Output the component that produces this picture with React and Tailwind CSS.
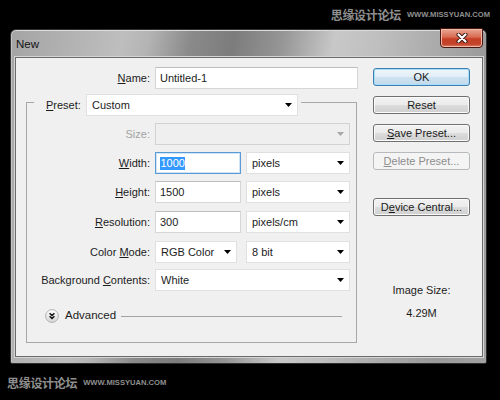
import React from "react";

function Tri({ color = "#000" }) {
  return (
    <svg width="7" height="4" viewBox="0 0 7 4" className="shrink-0">
      <path d="M0 0H7L3.5 4Z" fill={color} />
    </svg>
  );
}

function Select({ className, children, disabled }) {
  return (
    <div
      className={`${className} h-[22px] flex items-center justify-between pl-[5px] pr-[5px] border ${
        disabled ? "bg-[#efefef] border-[#d2d2d2]" : "bg-white border-[#e0e0e0]"
      }`}
    >
      <span>{children}</span>
      <Tri color={disabled ? "#a8a8a8" : "#000"} />
    </div>
  );
}

function Input({ className, children, focused }) {
  return (
    <div
      className={`${className} h-[22px] flex items-center pl-[4px] bg-white border ${
        focused
          ? "border-[#5b9bd5] shadow-[inset_0_0_0_1px_#cfe4f6]"
          : "border-[#d6d6d6] border-t-[#bdbdbd]"
      }`}
    >
      {children}
    </div>
  );
}

function Row({ label, children, labelClass = "w-[123px]", mt, dim }) {
  return (
    <div className={`flex items-center h-[22px] ${mt}`}>
      <div className={`${labelClass} text-right ${dim ? "text-[#a3a3a3]" : ""}`}>{label}</div>
      <div className="ml-[5px] flex gap-[5px]">{children}</div>
    </div>
  );
}

function Btn({ children, kind }) {
  let cls =
    "border-[#707070] text-[#1a1a1a] bg-[linear-gradient(to_bottom,#f2f2f2_0%,#ebebeb_50%,#dddddd_50%,#cfcfcf_100%)] shadow-[inset_0_0_0_1px_#fbfbfb]";
  if (kind === "ok")
    cls =
      "border-[#3c7fb1] text-[#1a1a1a] bg-[linear-gradient(to_bottom,#eef6fb_0%,#e1eef7_50%,#cfe3f1_50%,#c0d9ec_100%)] shadow-[inset_0_0_0_1px_#a9dcf7]";
  if (kind === "disabled")
    cls = "border-[#b7babd] text-[#8d8d8d] bg-[#f4f4f4]";
  return (
    <div
      className={`h-[18px] w-[97px] rounded-[3px] border flex items-center justify-center leading-none ${cls}`}
    >
      {children}
    </div>
  );
}

function Watermark() {
  return (
    <div className="flex items-center gap-[6px]">
      <span className="font-['Noto_Sans_CJK_SC',sans-serif] font-bold text-[12px] leading-none text-[#8f8f8f] tracking-[-0.3px] [text-shadow:0_0_1px_#000]">
        思缘设计论坛
      </span>
      <span className="font-['Liberation_Sans',Arial,sans-serif] font-bold text-[7.6px] leading-none text-[#8f8f8f]">
        WWW.MISSYUAN.COM
      </span>
    </div>
  );
}

export default function App() {
  return (
    <div className="w-[500px] h-[400px] bg-black overflow-hidden flex flex-col font-['Liberation_Sans',Arial,sans-serif] text-[11px] text-[#1c1c1c]">
      <div className="h-[29px] flex justify-end items-start pt-[9px] pr-[10px]">
        <Watermark />
      </div>

      {/* window */}
      <div className="ml-[10px] w-[477px] h-[335px] shrink-0 rounded-t-[6px] rounded-b-[2px] border border-[#2e2e2e] bg-[linear-gradient(100deg,#a4a4a4_0%,#bebebe_21%,#b4b4b4_26%,#8a8a8a_34%,#7c7c7c_42%,#959595_51%,#c8c8c8_61%,#bfbfbf_69%,#ababab_80%,#9a9a9a_90%,#a2a2a2_100%)] shadow-[inset_0_1px_0_#dcdcdc,inset_1px_0_0_#c4c4c4] flex flex-col">
        {/* title bar */}
        <div className="h-[27px] flex items-start justify-between">
          <div className="pl-[5px] pt-[6px] text-[11.5px] text-[#141414]">New</div>
          <div className="-mt-[2px] mr-[3px] w-[43px] h-[20px] rounded-b-[4px] border border-[#4a1610] bg-[linear-gradient(to_bottom,#e9a894_0%,#d86a52_45%,#c63d24_55%,#c4452c_85%,#e08870_100%)] shadow-[inset_0_0_0_1px_#f0b9a8] flex items-center justify-center">
            <svg width="12" height="10" viewBox="0 0 12 10">
              <path d="M2.5 1.5 9.5 8.5M9.5 1.5 2.5 8.5" stroke="#3a1510" strokeWidth="4" strokeLinecap="round" />
              <path d="M2.5 1.5 9.5 8.5M9.5 1.5 2.5 8.5" stroke="#fff" strokeWidth="2.2" strokeLinecap="round" />
            </svg>
          </div>
        </div>

        {/* client */}
        <div className="ml-[4px] mr-[3px] h-[300px] border border-[#6b6b6b] bg-[#f0f0f0] shadow-[0_0_0_1px_#d4d4d4] flex">
          {/* left column */}
          <div className="w-[342px] flex flex-col">
            <Row label={<><u>N</u>ame:</>} labelClass="w-[134px]" mt="mt-[9px]">
              <Input className="w-[203px]">Untitled-1</Input>
            </Row>

            <div className="mt-[13px] ml-[10px] w-[331px] h-[241px] border border-[#a7a7a7] flex flex-col">
              <div className="-mt-[9px] ml-[7px] w-[267px] h-[22px] bg-[#f0f0f0] flex items-center pl-[12px] pr-[3px]">
                <div className="w-[40px]">
                  <u>P</u>reset:
                </div>
                <Select className="w-[212px]">Custom</Select>
              </div>

              <Row label="Size:" dim mt="mt-[7px]">
                <Select className="w-[195px]" disabled>
                  {""}
                </Select>
              </Row>
              <Row label={<><u>W</u>idth:</>} mt="mt-[7px]">
                <Input className="w-[86px]" focused>
                  <span className="bg-[#3399ff] text-white leading-[13px] px-[0.5px]">1000</span>
                </Input>
                <Select className="w-[104px]">pixels</Select>
              </Row>
              <Row label={<><u>H</u>eight:</>} mt="mt-[7px]">
                <Input className="w-[86px]">1500</Input>
                <Select className="w-[104px]">pixels</Select>
              </Row>
              <Row label={<><u>R</u>esolution:</>} mt="mt-[8px]">
                <Input className="w-[86px]">300</Input>
                <Select className="w-[104px]">pixels/cm</Select>
              </Row>
              <Row label={<>Color <u>M</u>ode:</>} mt="mt-[8px]">
                <Select className="w-[82px]">RGB Color</Select>
                <div className="ml-[4px]">
                  <Select className="w-[104px]">8 bit</Select>
                </div>
              </Row>
              <Row label={<>Background <u>C</u>ontents:</>} mt="mt-[6px]">
                <Select className="w-[195px]">White</Select>
              </Row>

              <div className="mt-[18px] ml-[18px] mr-[14px] h-[14px] flex items-center">
                <svg width="14" height="14" viewBox="0 0 14 14" className="shrink-0">
                  <defs>
                    <linearGradient id="advg" x1="0" y1="0" x2="0" y2="1">
                      <stop offset="0" stopColor="#ffffff" />
                      <stop offset="1" stopColor="#d6d6d6" />
                    </linearGradient>
                  </defs>
                  <circle cx="7" cy="7" r="6.4" fill="url(#advg)" stroke="#a9a9a9" strokeWidth="0.9" />
                  <path d="M4.6 4.2 7 6.6 9.4 4.2M4.6 7.2 7 9.6 9.4 7.2" stroke="#111" strokeWidth="1.4" fill="none" />
                </svg>
                <span className="ml-[6px] text-[11.5px]">Advanced</span>
                <div className="ml-[5px] flex-1 h-px bg-[#a3a3a3]" />
              </div>
            </div>
          </div>

          {/* right column */}
          <div className="ml-[15px] mt-[10px] w-[97px] flex flex-col">
            <Btn kind="ok">OK</Btn>
            <div className="mt-[10px]">
              <Btn>Reset</Btn>
            </div>
            <div className="mt-[10px]">
              <Btn>
                <span><u>S</u>ave Preset...</span>
              </Btn>
            </div>
            <div className="mt-[10px]">
              <Btn kind="disabled">
                <span><u>D</u>elete Preset...</span>
              </Btn>
            </div>
            <div className="mt-[28px]">
              <Btn>
                <span>D<u>e</u>vice Central...</span>
              </Btn>
            </div>
            <div className="mt-[68px] text-center leading-[13px]">Image Size:</div>
            <div className="mt-[10px] text-center leading-[13px]">4.29M</div>
          </div>
        </div>
      </div>

      <div className="mt-[13px] pl-[7px] flex">
        <Watermark />
      </div>
    </div>
  );
}
